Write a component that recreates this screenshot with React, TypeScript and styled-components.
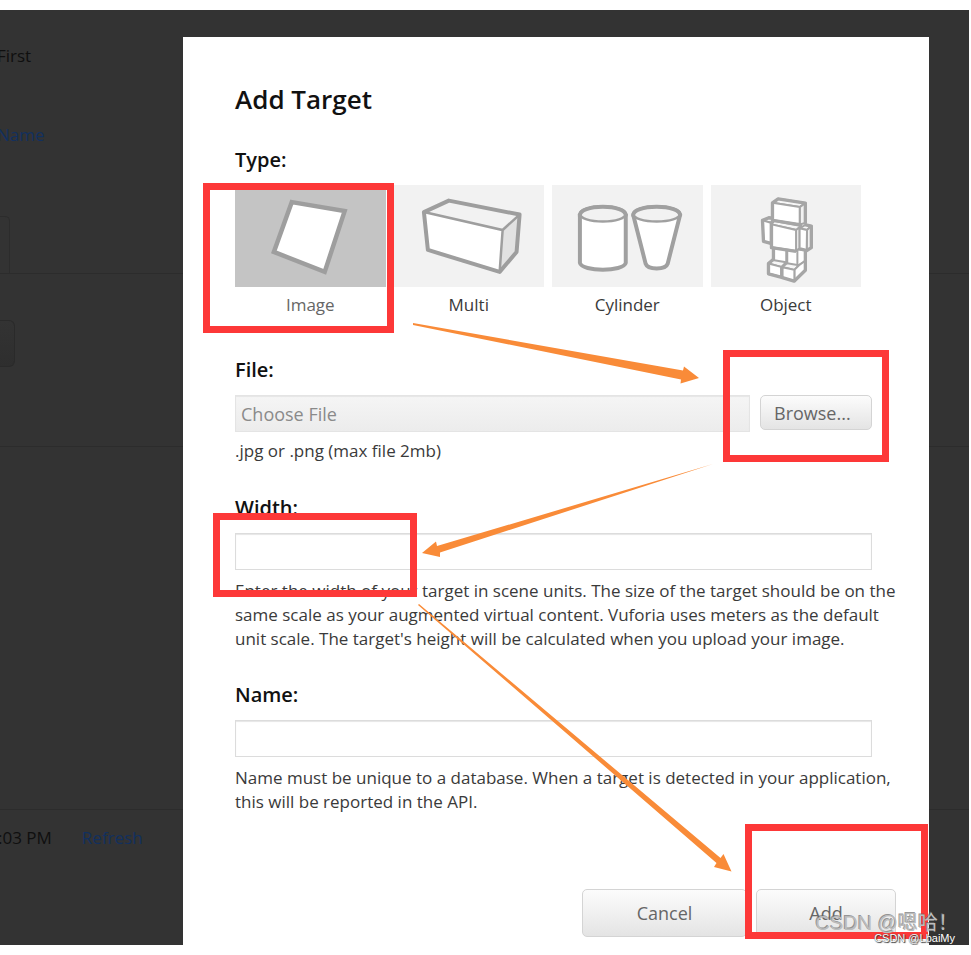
import React, { useState } from "react";
import styled, { createGlobalStyle } from "styled-components";

const GlobalStyle = createGlobalStyle`
  *, *::before, *::after { box-sizing: border-box; }
  body {
    margin: 0;
    background: #ffffff;
    font-family: "Open Sans", "Noto Sans", sans-serif;
    font-size: 17px;
    line-height: 24px;
    color: #3a3a3a;
  }
  button, input { font: inherit; }
`;

const Stage = styled.div`
  display: grid;
  grid-template-columns: minmax(0, 1fr);
  margin: 10px 2px 10px 0;
  background: #333333;
  position: relative;
  overflow: hidden;
`;

const Backdrop = styled.div`
  grid-area: 1 / 1;
  color: #0f0f0f;
`;

const Crumb = styled.div`
  height: 79px;
  padding-top: 34px;
  margin-left: -3px;
`;

const DimLink = styled.a`
  color: #12305f;
  text-decoration: none;
`;

const TabStrip = styled.div`
  height: 106px;
  display: flex;
  align-items: flex-end;
  border-bottom: 1px solid #2c2c2c;
`;

const TabStub = styled.div`
  width: 10px;
  height: 57px;
  border: 1px solid #2c2c2c;
  border-width: 1px 1px 0 0;
  border-radius: 0 5px 0 0;
`;

const ToolStrip = styled.div`
  height: 173px;
  padding-top: 46px;
  border-bottom: 1px solid #2c2c2c;
`;

const ToolStub = styled.div`
  width: 15px;
  height: 47px;
  border: 1px solid #2a2a2a;
  border-left: 0;
  border-radius: 0 6px 6px 0;
  background: linear-gradient(#333333, #2e2e2e);
`;

const ListArea = styled.div`
  height: 363px;
  border-bottom: 1px solid #2c2c2c;
`;

const StatusLine = styled.div`
  display: flex;
  gap: 30px;
  padding-top: 16px;
  margin-left: -2px;
`;

const Dialog = styled.form`
  grid-area: 1 / 1;
  position: relative;
  margin: 27px 40px 0 183px;
  padding: 46px 30px 8px 52px;
  background: #ffffff;
`;

const Title = styled.h1`
  margin: 0 0 33px;
  font-size: 26px;
  line-height: 32px;
  font-weight: 600;
  color: #111111;
`;

const TypeGroup = styled.fieldset`
  margin: 0;
  padding: 0;
  border: 0;
  min-width: 0;
`;

const headingStyle = `
  display: block;
  padding: 0;
  margin: 0 0 13px;
  font-size: 20px;
  line-height: 24px;
  font-weight: 600;
  color: #111111;
`;
const Legend = styled.legend`${headingStyle}`;
const FieldLabel = styled.label`${headingStyle}`;

const Tiles = styled.div`
  display: grid;
  grid-template-columns: repeat(4, minmax(0, 1fr));
  gap: 8px;
  margin-right: 38px;
`;

const Tile = styled.label<{ $on: boolean }>`
  display: flex;
  flex-direction: column;
  gap: 6px;
  text-align: center;
  cursor: pointer;
  color: ${(p) => (p.$on ? "#666666" : "#3a3a3a")};

  svg {
    display: block;
    width: 100%;
    height: 102px;
    background: ${(p) => (p.$on ? "#c4c4c4" : "#f2f2f2")};
  }
`;

const HiddenRadio = styled.input`
  position: absolute;
  opacity: 0;
  pointer-events: none;
`;

const Section = styled.div<{ $gap: number }>`
  margin-top: ${(p) => p.$gap}px;
`;

const FieldRow = styled.div`
  display: flex;
  align-items: flex-start;
  gap: 10px;
  margin-right: 27px;
`;

const TextField = styled.input`
  flex: 1;
  min-width: 0;
  height: 37px;
  padding: 0 5px;
  border: 1px solid #dcdcdc;
  border-radius: 0;
  background: #ffffff;
  box-shadow: inset 0 1px 1px #e6e6e6;
  outline: none;
`;

const FileField = styled(TextField)`
  border-color: #e4e4e4;
  background: linear-gradient(#f5f5f5, #ececec);
  font-size: 18px;

  &::placeholder {
    color: #8a8a8a;
    opacity: 1;
  }
`;

const Button = styled.button<{ $width: number; $height: number }>`
  width: ${(p) => p.$width}px;
  height: ${(p) => p.$height}px;
  padding: 0;
  border: 1px solid #d4d4d4;
  border-radius: 5px;
  background: linear-gradient(#fcfcfc, #e4e4e4);
  color: #666666;
  font-size: 18px;
  cursor: pointer;
`;

const BrowseButton = styled(Button)`
  padding: 0 13px;
  text-align: left;
`;

const Hint = styled.p<{ $gap: number }>`
  margin: ${(p) => p.$gap}px 0 0;
`;

const Actions = styled.div`
  display: flex;
  justify-content: flex-end;
  gap: 9px;
  margin: 75px 3px 0 0;
`;

const Mark = styled.div<{ $x: number; $y: number; $w: number; $h: number }>`
  position: absolute;
  left: ${(p) => p.$x}px;
  top: ${(p) => p.$y}px;
  width: ${(p) => p.$w}px;
  height: ${(p) => p.$h}px;
  border: 7px solid #fd3838;
  pointer-events: none;
`;

const Arrows = styled.svg`
  position: absolute;
  left: 0;
  top: 0;
  pointer-events: none;
`;

const Watermark = styled.div`
  position: absolute;
  right: 14px;
  bottom: 0;
  display: flex;
  flex-direction: column;
  align-items: flex-end;
  font-family: "Liberation Sans", "Noto Sans CJK SC", sans-serif;
  pointer-events: none;
`;

const MarkLarge = styled.span`
  font-size: 20px;
  line-height: 16px;
  padding-top: 2px;
  margin-right: -3px;
  color: #bcbcbc;
  text-shadow: -1px -1px 0 #666666aa;
`;

const MarkSmall = styled.span`
  font-size: 11px;
  line-height: 14px;
  color: #ffffff;
  text-shadow: 0 0 1px #333333, 1px 1px 1px #333333;
`;

const ImageArt = () => (
  <svg viewBox="0 0 151 102" aria-hidden="true">
    <path d="M57 17 L110 26 L90 87 L39 67 Z" fill="#fff" stroke="#9e9e9e" strokeWidth="4.5" />
  </svg>
);

const MultiArt = () => (
  <svg viewBox="0 0 151 102" aria-hidden="true">
    <path d="M30 27 L55 15.5 L126 29.5 L109 45 Z" fill="#f2f2f2" />
    <path d="M126 29.5 L123 67 L106 87 L109 45 Z" fill="#e2e2e2" />
    <path d="M30 27 L109 45 L106 87 L34 65 Z" fill="#fff" />
    <path d="M30 27 L109 45 L126 29.5 M109 45 L106 87" fill="none" stroke="#9e9e9e" strokeWidth="2.5" />
    <path d="M30 27 L55 15.5 L126 29.5 L123 67 L106 87 L34 65 Z" fill="none" stroke="#9e9e9e" strokeWidth="4" strokeLinejoin="round" />
  </svg>
);

const CylinderArt = () => (
  <svg viewBox="0 0 151 102" aria-hidden="true" stroke="#a0a0a0" strokeWidth="4">
    <path d="M28 29 V78 C30 87 72 87 74 78 V29" fill="#fff" />
    <ellipse cx="51" cy="29" rx="23" ry="7.5" fill="#f2f2f2" strokeWidth="2.5" />
    <path d="M28 31 C26 18.5 76 18.5 74 31" fill="none" />
    <path d="M81.5 30 L94 79 C96 85 114 85 116 79 L128.5 30" fill="#fff" />
    <ellipse cx="105" cy="29" rx="23.5" ry="7.5" fill="#f2f2f2" strokeWidth="2.5" />
    <path d="M81.5 31 C79 18.5 131 18.5 128.5 31" fill="none" />
  </svg>
);

const ObjectArt = () => (
  <svg viewBox="2 0 453 306" aria-hidden="true" stroke="#a6a6a6" strokeWidth="6" strokeLinejoin="round" fill="#fff">
    <path d="M190 190 V228 L230 238 L285 250 V195 Z" />
    <path d="M230 198 V238" strokeWidth="9" />
    <path d="M262 196 V243 L284 230" fill="none" />
    <path d="M175 236 L188 225 L228 232 L214 246 Z" fill="#f7f7f7" />
    <path d="M175 236 L213 246 V276 L175 266 Z" />
    <path d="M217 246 L231 235 L267 241 L253 255 Z" fill="#f7f7f7" />
    <path d="M253 255 L267 241 L285 228 V256 L253 288 Z" />
    <path d="M217 247 L253 255 V288 L217 279 Z" />
    <path d="M215 247 V277" strokeWidth="9" />
    <path d="M190 192 V223 L175 236 V267 L212 277 L252 289 L286 256 V200" fill="none" strokeWidth="10" />
    <path d="M157 106 L176 98 L190 101 L182 113 Z" fill="#f7f7f7" />
    <path d="M157 106 L182 113 V175 L160 169 Z" />
    <path d="M190 99 L176 98 L157 106 L160 169 L182 175" fill="none" strokeWidth="10" />
    <path d="M270 130 L286 119 L304 123 L291 135 Z" fill="#f7f7f7" />
    <path d="M291 135 L304 123 V188 L290 196 Z" fill="#f2f2f2" />
    <path d="M268 130 L291 135 L290 196 L268 191 Z" />
    <path d="M284 119 L304 123 V188 L290 197 L270 192" fill="none" strokeWidth="10" />
    <path d="M184 118 L192 108 L274 123 L260 135 Z" fill="#f7f7f7" />
    <path d="M258 135 L268 127 V190 L258 198 Z" fill="#f2f2f2" />
    <path d="M184 118 L258 135 V198 L184 187 Z" />
    <path d="M184 110 V188 L258 199" fill="none" strokeWidth="10" />
    <path d="M187 53 L204 41 L286 54 L269 66 Z" fill="#f7f7f7" />
    <path d="M269 66 L286 54 V114 L269 118 Z" fill="#f2f2f2" />
    <path d="M187 53 L269 66 V117 L187 104 Z" />
    <path d="M187 107 V53 L204 41 L286 54 V116" fill="none" strokeWidth="10" />
    <path d="M187 106 L276 121" fill="none" strokeWidth="8" />
  </svg>
);

const TYPES = [
  { name: "Image", Art: ImageArt },
  { name: "Multi", Art: MultiArt },
  { name: "Cylinder", Art: CylinderArt },
  { name: "Object", Art: ObjectArt },
];

export default function App() {
  const [type, setType] = useState("Image");

  return (
    <>
      <GlobalStyle />
      <Stage>
        <Backdrop>
          <Crumb>First</Crumb>
          <Crumb>
            <DimLink href="#name">Name</DimLink>
          </Crumb>
          <TabStrip>
            <TabStub />
          </TabStrip>
          <ToolStrip>
            <ToolStub />
          </ToolStrip>
          <ListArea />
          <StatusLine>
            <span>:03 PM</span>
            <DimLink href="#refresh">Refresh</DimLink>
          </StatusLine>
        </Backdrop>

        <Dialog role="dialog" aria-labelledby="dialog-title" onSubmit={(e) => e.preventDefault()}>
          <Title id="dialog-title">Add Target</Title>

          <TypeGroup>
            <Legend>Type:</Legend>
            <Tiles>
              {TYPES.map(({ name, Art }) => (
                <Tile key={name} $on={type === name}>
                  <HiddenRadio
                    type="radio"
                    name="target-type"
                    value={name}
                    checked={type === name}
                    onChange={() => setType(name)}
                  />
                  <Art />
                  {name}
                </Tile>
              ))}
            </Tiles>
          </TypeGroup>

          <Section $gap={41}>
            <FieldLabel htmlFor="target-file">File:</FieldLabel>
            <FieldRow>
              <FileField id="target-file" placeholder="Choose File" readOnly />
              <BrowseButton type="button" $width={112} $height={35}>Browse...</BrowseButton>
            </FieldRow>
            <Hint $gap={7}>.jpg or .png (max file 2mb)</Hint>
          </Section>

          <Section $gap={33}>
            <FieldLabel htmlFor="target-width">Width:</FieldLabel>
            <FieldRow>
              <TextField id="target-width" type="text" />
            </FieldRow>
            <Hint $gap={9}>
              Enter the width of your target in scene units. The size of the target should be on the
              same scale as your augmented virtual content. Vuforia uses meters as the default unit
              scale. The target's height will be calculated when you upload your image.
            </Hint>
          </Section>

          <Section $gap={32}>
            <FieldLabel htmlFor="target-name">Name:</FieldLabel>
            <FieldRow>
              <TextField id="target-name" type="text" />
            </FieldRow>
            <Hint $gap={9}>
              Name must be unique to a database. When a target is detected in your application, this
              will be reported in the API.
            </Hint>
          </Section>

          <Actions>
            <Button type="button" $width={165} $height={48}>Cancel</Button>
            <Button type="submit" $width={140} $height={48}>Add</Button>
          </Actions>

          <Mark $x={20} $y={146} $w={191} $h={150} />
          <Mark $x={540} $y={313} $w={166} $h={112} />
          <Mark $x={30} $y={476} $w={204} $h={84} />
          <Mark $x={562} $y={787} $w={183} $h={115} />
          <Arrows width="746" height="908" viewBox="183 37 746 908" fill="#f98b38" aria-hidden="true">
            <path d="M413 323 L683 370.5 L684 366.5 L699 378 L680.5 383.5 L681 379.5 L413 325 Z" />
            <path d="M713 464 L437 546 L436 541.5 L422 553 L440 557 L440 552.5 Z" />
            <path d="M419 604 L720.5 858 L723.5 854 L731.5 871.5 L714 867 L716.5 863 L418 605 Z" />
          </Arrows>
        </Dialog>

        <Watermark aria-hidden="true">
          <MarkLarge>CSDN @嗯哈！</MarkLarge>
          <MarkSmall>CSDN @LbaiMy</MarkSmall>
        </Watermark>
      </Stage>
    </>
  );
}
